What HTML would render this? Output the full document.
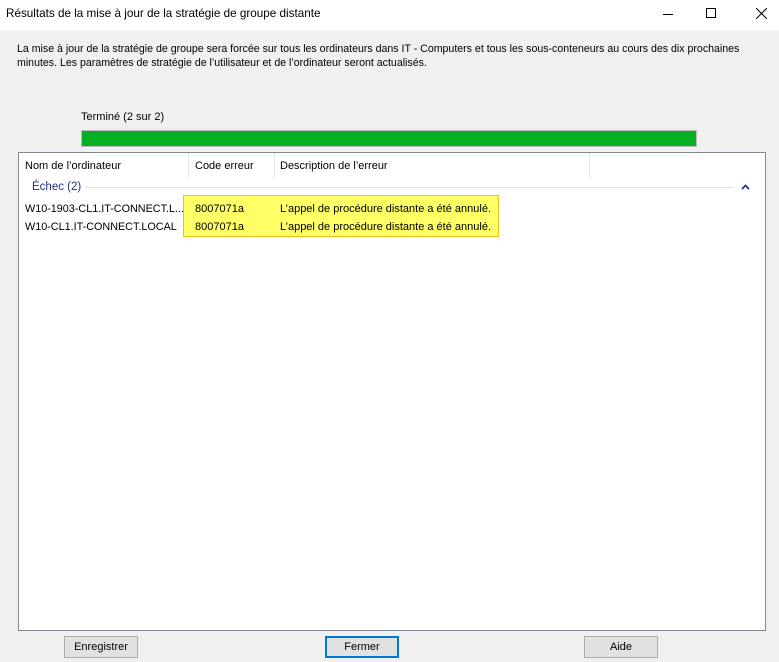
<!DOCTYPE html>
<html><head><meta charset="utf-8"><style>
*{margin:0;padding:0;box-sizing:border-box}
body{width:779px;height:662px;background:#f0f0f0;font-family:"Liberation Sans",sans-serif;font-size:11px;color:#000;position:relative;overflow:hidden}
.a{position:absolute;white-space:nowrap}
#tb{position:absolute;left:0;top:0;width:779px;height:30px;background:#fff}
.btn{position:absolute;top:636px;height:22px;width:74px;background:#e1e1e1;border:1px solid #adadad;text-align:center;line-height:20px;font-size:11px}
</style></head><body>
<div id="tb"></div>
<div class="a" style="left:6px;top:7px;font-size:11.7px">Résultats de la mise à jour de la stratégie de groupe distante</div>
<div class="a" style="left:663px;top:14px;width:10px;height:1px;background:#000"></div>
<div class="a" style="left:706px;top:8px;width:10px;height:10px;border:1px solid #000"></div>
<svg class="a" style="left:756px;top:8px" width="11" height="11"><path d="M0 0L11 11M11 0L0 11" stroke="#000" stroke-width="1"/></svg>
<div class="a" style="left:17px;top:42px;font-size:10.6px;line-height:14px">La mise à jour de la stratégie de groupe sera forcée sur tous les ordinateurs dans IT - Computers et tous les sous-conteneurs au cours des dix prochaines<br>minutes. Les paramètres de stratégie de l’utilisateur et de l’ordinateur seront actualisés.</div>
<div class="a" style="left:81px;top:111px">Terminé (2 sur 2)</div>
<div class="a" style="left:81px;top:130px;width:616px;height:17px;background:#06b025;border:1px solid #bcbcbc"></div>
<div class="a" style="left:18px;top:152px;width:748px;height:479px;background:#fff;border:1px solid #828790"></div>
<div class="a" style="left:188px;top:153px;width:1px;height:25px;background:#e5e5e5"></div>
<div class="a" style="left:274px;top:153px;width:1px;height:25px;background:#e5e5e5"></div>
<div class="a" style="left:589px;top:153px;width:1px;height:25px;background:#e5e5e5"></div>
<div class="a" style="left:25px;top:160px">Nom de l’ordinateur</div>
<div class="a" style="left:195px;top:160px">Code erreur</div>
<div class="a" style="left:280px;top:160px">Description de l’erreur</div>
<div class="a" style="left:32px;top:181px;color:#1e3287;font-size:11.5px">Échec (2)</div>
<div class="a" style="left:85px;top:187px;width:648px;height:1px;background:#e2e2e2"></div>
<svg class="a" style="left:741px;top:184px" width="9" height="6"><path d="M1 5L4.5 1.5L8 5" stroke="#1e3287" stroke-width="1.8" fill="none"/></svg>
<div class="a" style="left:183px;top:195px;width:316px;height:42px;background:#ffff66;border:1px solid #f0c020"></div>
<div class="a" style="left:25px;top:203px;font-size:10.8px">W10-1903-CL1.IT-CONNECT.L...</div>
<div class="a" style="left:25px;top:221px;font-size:10.8px">W10-CL1.IT-CONNECT.LOCAL</div>
<div class="a" style="left:195px;top:203px">8007071a</div>
<div class="a" style="left:195px;top:221px">8007071a</div>
<div class="a" style="left:280px;top:203px">L’appel de procédure distante a été annulé.</div>
<div class="a" style="left:280px;top:221px">L’appel de procédure distante a été annulé.</div>
<div class="btn" style="left:64px">Enregistrer</div>
<div class="btn" style="left:325px;border:2px solid #0078d7;line-height:18px">Fermer</div>
<div class="btn" style="left:584px">Aide</div>
</body></html>
